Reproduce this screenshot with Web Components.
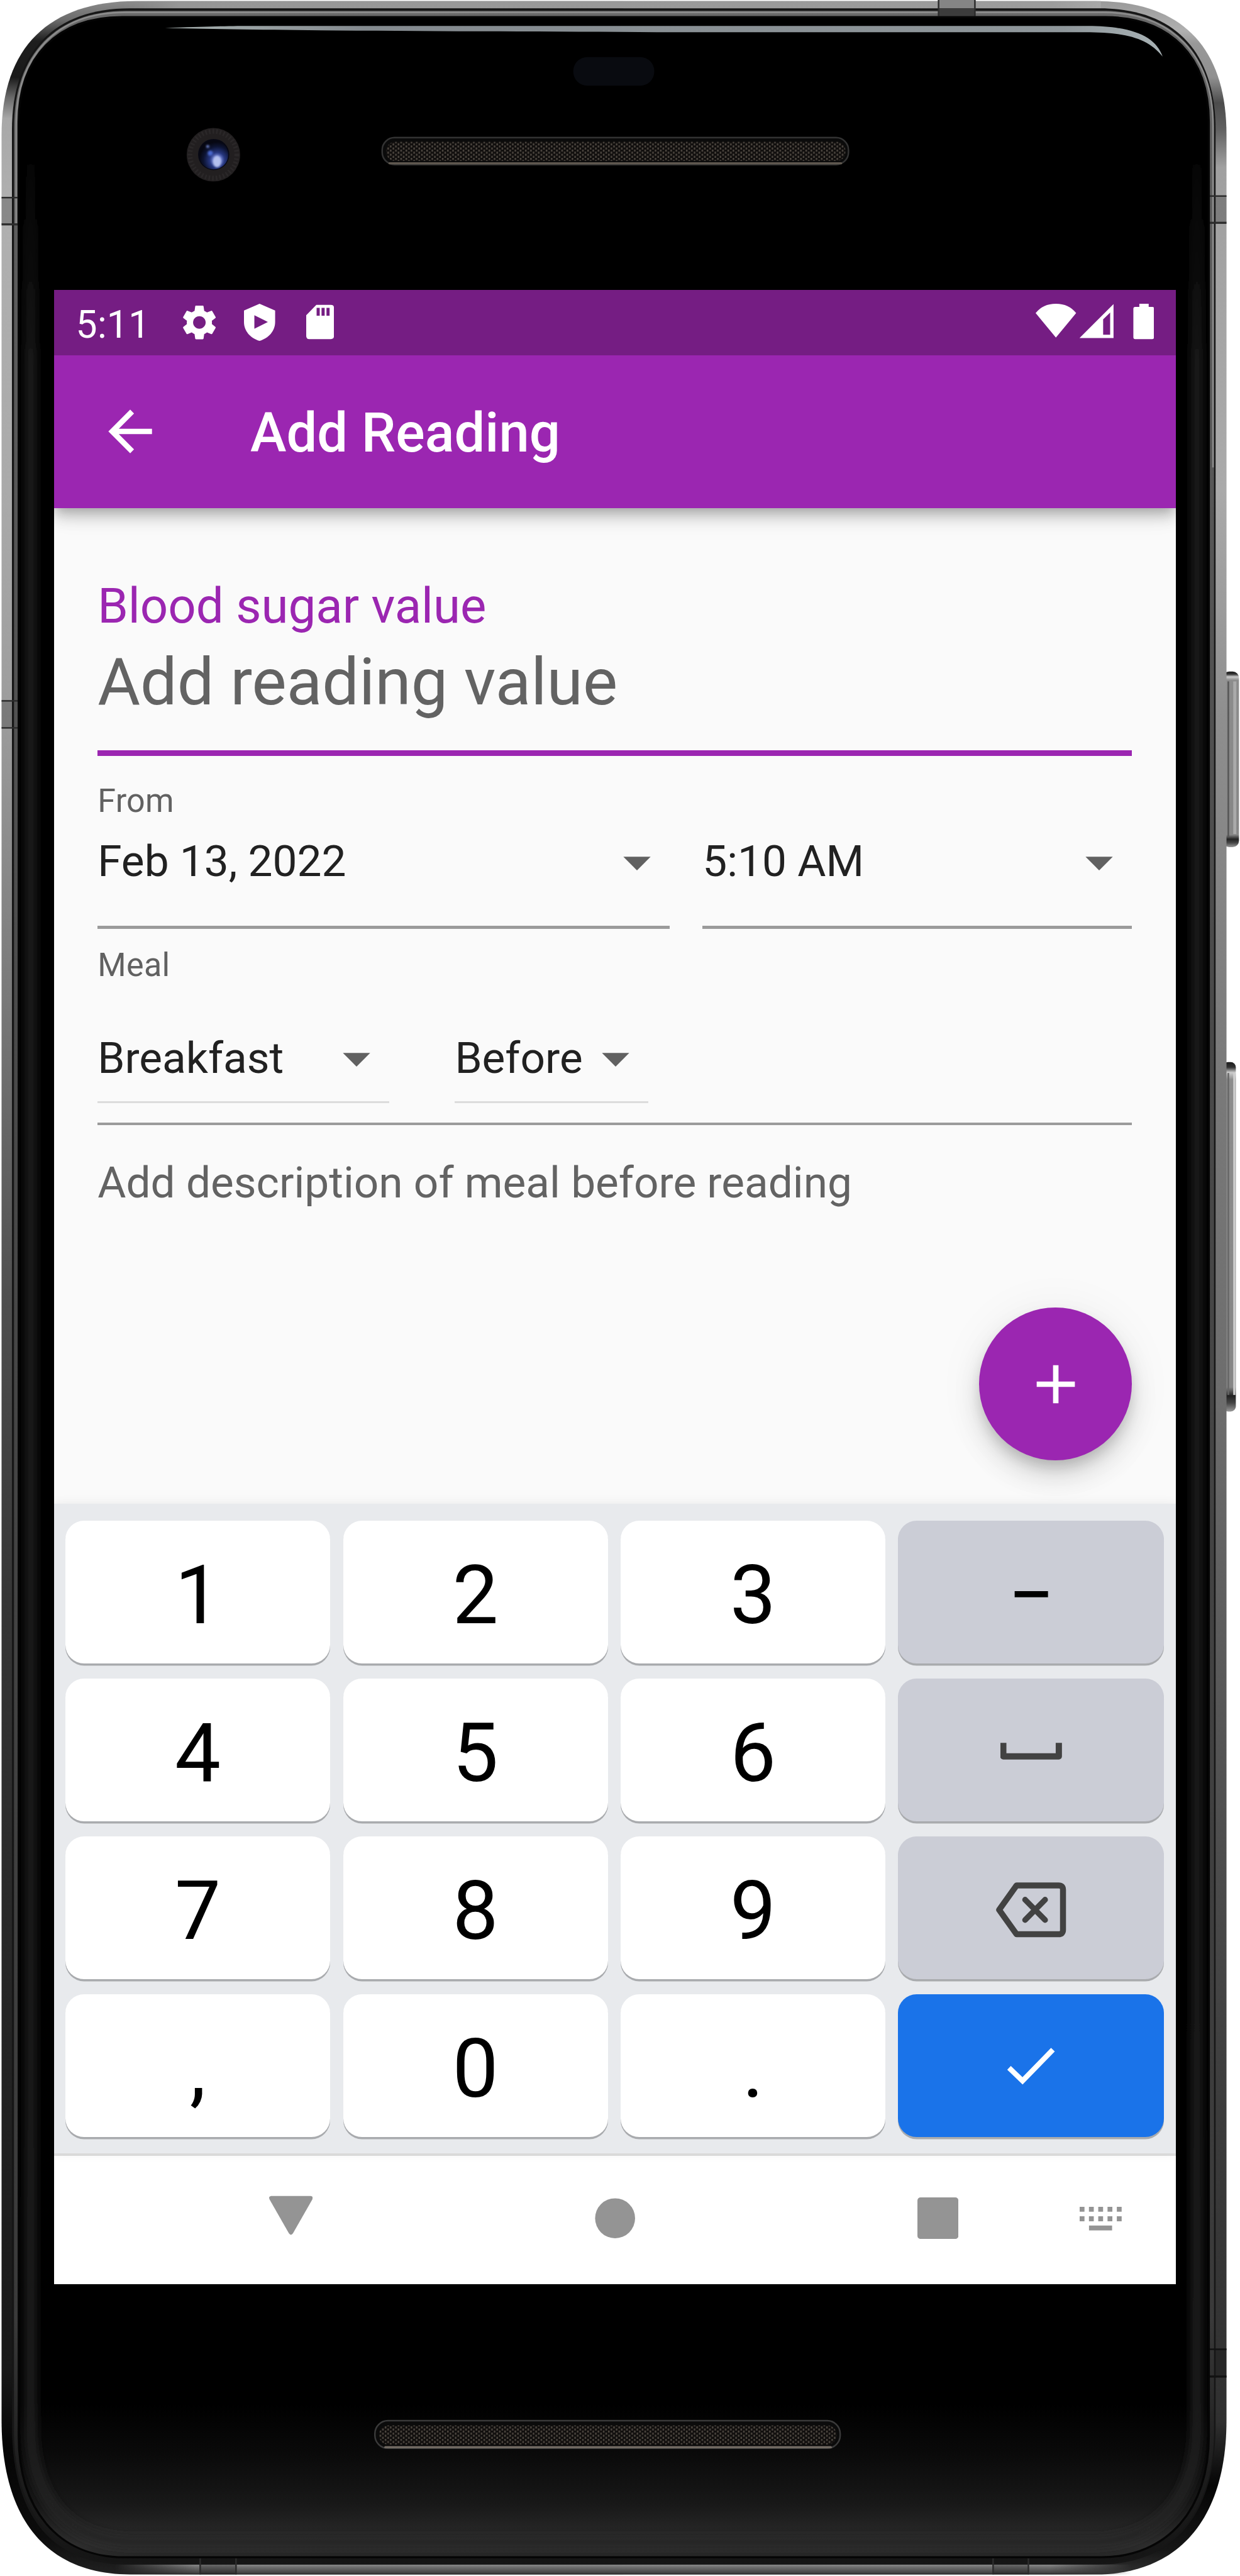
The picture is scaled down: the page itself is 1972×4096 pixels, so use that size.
<!DOCTYPE html>
<html lang="en">
<head>
<meta charset="utf-8">
<title>Add Reading</title>
<style>
  /* 1rem is 100 device units; every length below is given in those units */
  html { font-size: 82.58px; background: #fff; }
  body { margin: 0; font-family: Roboto, "Liberation Sans", sans-serif; overflow: hidden; }
</style>
</head>
<body>
<device-frame>
  <status-bar time="5:11"></status-bar>
  <app-bar>Add Reading</app-bar>
  <reading-form></reading-form>
  <number-pad></number-pad>
  <nav-bar></nav-bar>
</device-frame>

<script>
const define = (name, markup) => {
  const tpl = document.createElement('template');
  tpl.innerHTML = markup;
  customElements.define(name, class extends HTMLElement {
    constructor() {
      super();
      this.attachShadow({ mode: 'open' }).append(tpl.content.cloneNode(true));
    }
    connectedCallback() {
      this.shadowRoot.querySelectorAll('[data-attr]').forEach(n => {
        n.textContent = this.getAttribute(n.dataset.attr) || '';
      });
    }
  });
};

/* ---------- device shell ---------- */
define('device-frame', `
<style>
  :host { display: grid; width: 23.88rem; height: 49.6rem; }
  svg, .screen { grid-area: 1 / 1; }
  svg { width: 23.88rem; height: 49.6rem; display: block; }
  .screen { margin: 5.58rem 0 0 1.04rem; width: 21.6rem; height: 38.4rem; display: flex; flex-direction: column; background: #fafafa; overflow: hidden; z-index: 1; }
</style>
<svg viewBox="0 0 2388 4960" aria-hidden="true">
  <defs>
    <linearGradient id="metalL" gradientUnits="userSpaceOnUse" x1="0" y1="0" x2="0" y2="4960">
      <stop offset="0" stop-color="#8c8c8c"/><stop offset=".008" stop-color="#6a6a6a"/><stop offset=".016" stop-color="#1e1e1e"/>
      <stop offset=".03" stop-color="#1a1a1a"/><stop offset=".038" stop-color="#6a6a6a"/><stop offset=".046" stop-color="#a8a8a8"/>
      <stop offset=".08" stop-color="#b0b0b0"/><stop offset=".19" stop-color="#aaa"/><stop offset=".28" stop-color="#9c9c9c"/>
      <stop offset=".39" stop-color="#787878"/><stop offset=".5" stop-color="#505050"/><stop offset=".62" stop-color="#363636"/>
      <stop offset=".78" stop-color="#252525"/><stop offset=".92" stop-color="#181818"/><stop offset=".95" stop-color="#050505"/>
      <stop offset=".985" stop-color="#0c0c0c"/><stop offset="1" stop-color="#222"/>
    </linearGradient>
    <linearGradient id="metalR" gradientUnits="userSpaceOnUse" x1="0" y1="0" x2="0" y2="4960">
      <stop offset="0" stop-color="#999"/><stop offset=".012" stop-color="#b0b0b0"/><stop offset=".017" stop-color="#989898"/>
      <stop offset=".03" stop-color="#909090"/><stop offset=".04" stop-color="#4c4c4c"/><stop offset=".05" stop-color="#606060"/><stop offset=".065" stop-color="#a0a0a0"/>
      <stop offset=".19" stop-color="#aaa"/><stop offset=".28" stop-color="#8e8e8e"/><stop offset=".4" stop-color="#7c7c7c"/>
      <stop offset=".55" stop-color="#6c6c6c"/><stop offset=".68" stop-color="#545454"/><stop offset=".82" stop-color="#3c3c3c"/>
      <stop offset=".94" stop-color="#303030"/><stop offset=".965" stop-color="#050505"/><stop offset=".99" stop-color="#161616"/><stop offset="1" stop-color="#333"/>
    </linearGradient>
    <linearGradient id="bandV" gradientUnits="userSpaceOnUse" x1="0" y1="0" x2="0" y2="4960">
      <stop offset="0" stop-color="#6a6a6a"/><stop offset=".05" stop-color="#606060"/><stop offset=".4" stop-color="#4a4a4a"/>
      <stop offset=".9" stop-color="#3a3a3a"/><stop offset=".96" stop-color="#1c1c1c"/><stop offset="1" stop-color="#141414"/>
    </linearGradient>
    <linearGradient id="topEdge" x1="0" x2="1" y1="0" y2="0">
      <stop offset="0" stop-color="#8e8e8e" stop-opacity="0"/><stop offset=".06" stop-color="#969696"/><stop offset=".95" stop-color="#9c9c9c"/><stop offset="1" stop-color="#a8a8a8"/>
    </linearGradient>
    <linearGradient id="botEdge" x1="0" x2="0" y1="0" y2="1">
      <stop offset="0" stop-color="#8a8a8a"/><stop offset=".3" stop-color="#6c6c6c"/><stop offset=".8" stop-color="#474747"/><stop offset="1" stop-color="#2a2a2a"/>
    </linearGradient>
    <linearGradient id="botFade" gradientUnits="userSpaceOnUse" x1="220" y1="0" x2="2180" y2="0">
      <stop offset="0" stop-color="#fff" stop-opacity="0"/><stop offset=".08" stop-color="#fff"/><stop offset=".92" stop-color="#fff"/><stop offset="1" stop-color="#fff" stop-opacity="0"/>
    </linearGradient>
    <mask id="botMask" maskUnits="userSpaceOnUse" x="0" y="4900" width="2388" height="60"><rect x="0" y="4900" width="2388" height="60" fill="url(#botFade)"/></mask>
    <linearGradient id="chin" gradientUnits="userSpaceOnUse" x1="0" y1="4630" x2="0" y2="4924">
      <stop offset="0" stop-color="#000"/><stop offset=".3" stop-color="#090909"/><stop offset=".65" stop-color="#181818"/><stop offset=".92" stop-color="#2d2d2d"/><stop offset="1" stop-color="#282828"/>
    </linearGradient>
    <linearGradient id="shine" x1="0" x2="1" y1="0" y2="0">
      <stop offset="0" stop-color="#a9b3b2"/><stop offset=".2" stop-color="#848a8f"/><stop offset=".9" stop-color="#8f979b"/><stop offset="1" stop-color="#a8b2b5"/>
    </linearGradient>
    <linearGradient id="glow" gradientUnits="userSpaceOnUse" x1="0" y1="250" x2="0" y2="4900">
      <stop offset="0" stop-color="#212121" stop-opacity="0"/><stop offset=".1" stop-color="#212121"/><stop offset="1" stop-color="#252525"/>
    </linearGradient>
    <linearGradient id="btn" x1="0" x2="0" y1="0" y2="1">
      <stop offset="0" stop-color="#1c1c1c"/><stop offset=".015" stop-color="#333"/><stop offset=".03" stop-color="#ccc"/><stop offset=".05" stop-color="#8c8c8c"/>
      <stop offset=".93" stop-color="#868686"/><stop offset=".955" stop-color="#222"/><stop offset=".975" stop-color="#444"/><stop offset="1" stop-color="#999"/>
    </linearGradient>
    <pattern id="mesh" width="10" height="8" patternUnits="userSpaceOnUse">
      <rect width="10" height="8" fill="#100e0d"/><rect x="1" y="0" width="3" height="4" fill="#4e4841"/><rect x="6" y="4" width="3" height="4" fill="#4e4841"/>
    </pattern>
    <radialGradient id="lens" cx=".62" cy=".68" r=".62">
      <stop offset="0" stop-color="#b3bff0"/><stop offset=".2" stop-color="#6f80cf"/><stop offset=".42" stop-color="#26367e"/><stop offset=".75" stop-color="#0d1433"/><stop offset="1" stop-color="#060712"/>
    </radialGradient>
    <clipPath id="leftHalf"><rect x="0" y="0" width="1200" height="4960"/></clipPath>
    <clipPath id="rightHalf"><rect x="1200" y="0" width="1188" height="4960"/></clipPath>
    <clipPath id="glassClip"><path id="g" d="M36 235C36 110 110 33 235 33H2129C2254 33 2328 110 2328 235V4690C2328 4830 2250 4924 2120 4924H240C110 4924 36 4830 36 4690Z"/></clipPath>
    <filter id="soft" filterUnits="userSpaceOnUse" x="0" y="200" width="2388" height="4760"><feGaussianBlur stdDeviation="9"/></filter>
    <filter id="tiny"><feGaussianBlur stdDeviation="2"/></filter>
  </defs>

  <!-- side buttons -->
  <g>
    <rect x="2355" y="1293" width="31" height="338" rx="12" fill="url(#btn)"/>
    <rect x="2375" y="1312" width="6" height="294" fill="#aaa"/>
    <rect x="2364" y="1312" width="3" height="300" fill="#555"/>
    <rect x="2355" y="2045" width="25" height="673" rx="10" fill="url(#btn)"/>
    <rect x="2375" y="2066" width="4" height="620" fill="#d0d0d0"/>
    <rect x="2364" y="2066" width="3" height="620" fill="#666"/>
  </g>

  <!-- metal body -->
  <path clip-path="url(#leftHalf)" fill="url(#metalL)" d="M3 260C3 90 95 2 262 2H2110C2275 2 2362 90 2362 260V4660C2362 4850 2270 4957 2110 4957H250C90 4957 3 4850 3 4660Z"/>
  <path clip-path="url(#rightHalf)" fill="url(#metalR)" d="M3 260C3 90 95 2 262 2H2110C2275 2 2362 90 2362 260V4660C2362 4850 2270 4957 2110 4957H250C90 4957 3 4850 3 4660Z"/>
  <rect x="230" y="2" width="1890" height="14" fill="url(#topEdge)"/>
  <rect x="220" y="4938" width="1960" height="19" fill="url(#botEdge)" mask="url(#botMask)"/>
  <!-- antenna bands -->
  <g fill="#000" fill-opacity=".22">
    <rect x="3" y="381" width="33" height="50"/><rect x="2329" y="378" width="33" height="50"/>
    <rect x="3" y="1350" width="33" height="50"/><rect x="2329" y="4524" width="33" height="50"/>
    <rect x="385" y="4926" width="70" height="31"/><rect x="1913" y="4926" width="68" height="31"/>
  </g>
  <rect x="1808" y="0" width="70" height="16" fill="#858585"/>
  <!-- dark seam and inner bevel -->
  <path d="M23 250C23 100 105 16 250 16H2118C2262 16 2341 100 2341 250V4670C2341 4845 2258 4938 2115 4938H245C100 4938 23 4845 23 4670Z" fill="#161616"/>
  <path d="M27 245C27 104 108 21 244 21H2122C2258 21 2338 104 2338 245V4680C2338 4838 2256 4934 2118 4934H242C106 4934 27 4838 27 4680Z" fill="url(#bandV)"/>
  <path d="M31 430V242C31 106 110 24 240 24H2125C2256 24 2336 106 2336 242V900" fill="none" stroke="#8d8d8d" stroke-width="3"/>
  <rect x="1808" y="16" width="70" height="15" fill="#3c3c3c"/>
  <g fill="#2c2c2c">
    <rect x="3" y="379" width="33" height="3"/><rect x="3" y="430" width="33" height="4"/>
    <rect x="2329" y="376" width="33" height="3"/><rect x="2329" y="427" width="33" height="4"/>
    <rect x="3" y="1348" width="33" height="3"/><rect x="3" y="1400" width="33" height="3"/>
    <rect x="2329" y="4522" width="33" height="3" fill="#111"/><rect x="2329" y="4574" width="33" height="4" fill="#111"/>
    <rect x="1806" y="0" width="3" height="31"/><rect x="1876" y="0" width="3" height="31"/>
    <rect x="384" y="4926" width="3" height="31"/><rect x="453" y="4926" width="3" height="31"/>
    <rect x="1911" y="4926" width="3" height="31"/><rect x="1979" y="4926" width="3" height="31"/>
  </g>

  <!-- glass -->
  <use href="#g" fill="#000"/>
  <g clip-path="url(#glassClip)">
    <rect x="36" y="4630" width="2292" height="294" fill="url(#chin)"/>
    <path d="M59 250V4670C59 4800 120 4890 250 4895H2110C2240 4890 2305 4800 2305 4670V250" fill="none" stroke="url(#glow)" stroke-width="18" filter="url(#soft)"/>
  </g>
  <use href="#g" fill="none" stroke="#050505" stroke-width="4"/>

  <path d="M318 54C400 51 440 50 480 50H2095C2180 50 2226 70 2239 109C2210 72 2165 62 2090 62H1300C900 60 500 59 318 54Z" fill="url(#shine)"/>
  <rect x="1104" y="110" width="156" height="55" rx="27" fill="#090b10"/>

  <!-- camera -->
  <circle cx="411" cy="298" r="51.5" fill="#221f20"/>
  <circle cx="411" cy="298" r="45" fill="none" stroke="#2b2829" stroke-width="9" stroke-dasharray="3 4"/>
  <circle cx="411.500" cy="297.500" r="30" fill="#070814"/>
  <circle cx="411.500" cy="298" r="28" fill="url(#lens)"/>
  <g filter="url(#tiny)"><ellipse cx="418" cy="311" rx="8" ry="11" fill="#b4c0ee"/><circle cx="405" cy="295" r="5" fill="#4a66cc"/><circle cx="400" cy="282" r="3" fill="#6c80c8"/></g>

  <!-- speakers -->
  <g>
    <rect x="736" y="265" width="898" height="52" rx="24" fill="#0b0b0b" stroke="#333" stroke-width="3"/>
    <rect x="744" y="273" width="884" height="37" rx="17" fill="url(#mesh)"/>
    <path d="M750 314.500H1620" stroke="#5f584f" stroke-width="4" stroke-linecap="round"/>
    <rect x="722" y="4661" width="896" height="53" rx="25" fill="#0b0b0b" stroke="#3a3a3a" stroke-width="3"/>
    <rect x="730" y="4670" width="881" height="37" rx="18" fill="url(#mesh)"/>
    <path d="M742 4712H1600" stroke="#746c64" stroke-width="4" stroke-linecap="round"/>
  </g>
</svg>
<div class="screen"><slot></slot></div>`);

/* ---------- status bar ---------- */
define('status-bar', `
<style>
  :host { display: flex; align-items: center; justify-content: space-between; box-sizing: border-box; height: 1.26rem; flex: none; background: #751d83; color: #fff; padding: 0 .42rem 0 .42rem; position: relative; z-index: 2; }
  .l, .r { display: flex; align-items: center; }
  .time { font-size: .735rem; line-height: .86rem; letter-spacing: .003rem; padding-top: .08rem; width: 2.04rem; }
  svg { display: block; fill: #fff; }
</style>
<div class="l">
  <span class="time" data-attr="time"></span>
  <svg style="width:.68rem;height:.72rem" viewBox="1.9 1.300 20.200 21.400"><path d="M19.140 12.940c.04-.3.06-.61.06-.94 0-.32-.02-.64-.07-.94l2.030-1.580c.18-.14.23-.41.12-.61l-1.920-3.320c-.12-.22-.37-.29-.59-.22l-2.390.96c-.5-.38-1.030-.7-1.620-.94l-.36-2.540c-.04-.24-.24-.41-.48-.41h-3.840c-.24 0-.43.17-.47.41l-.36 2.540c-.59.24-1.130.57-1.620.94l-2.390-.96c-.22-.08-.47 0-.59.22L2.740 8.870c-.12.21-.08.47.12.61l2.030 1.580c-.05.3-.09.63-.09.94s.02.64.07.94l-2.030 1.580c-.18.14-.23.41-.12.61l1.920 3.320c.12.22.37.29.59.22l2.390-.96c.5.38 1.030.7 1.620.94l.36 2.540c.05.24.24.41.48.41h3.840c.24 0 .44-.17.47-.41l.36-2.540c.59-.24 1.130-.56 1.620-.94l2.390.96c.22.08.47 0 .59-.22l1.920-3.320c.12-.22.07-.47-.12-.61l-2.010-1.580zM12 15.600c-1.980 0-3.600-1.620-3.600-3.600s1.620-3.600 3.600-3.600 3.600 1.620 3.600 3.600-1.620 3.600-3.600 3.600z"/></svg>
  <svg style="width:.6rem;height:.72rem;margin-left:.52rem" viewBox="470 586 60 72"><path fill-rule="evenodd" d="M500 586l30 13v22c0 17-12 31-30 36.500-18-5.500-30-19.500-30-36.500v-22zM490 608v26l26-13z"/></svg>
  <svg style="width:.54rem;height:.72rem;margin-left:.595rem" viewBox="589.500 586 54 72"><path fill-rule="evenodd" d="M609 588h28q6 0 6 6v54q0 6-6 6h-41.500q-6 0-6-6v-40zM609.500 594v15h6v-15zm9.500 0v15h6v-15zm9.500 0v15h6v-15z"/></svg>
</div>
<div class="r">
  <svg style="width:2.28rem;height:.72rem" viewBox="1994 586 228 72"><path d="M1994 604Q2008 586 2033 586T2072 604L2033 651Z"/><path fill-rule="evenodd" d="M2144 586.500V652H2078.500ZM2137.500 603L2124 616V645.500H2137.500Z"/><path d="M2193.700 586h18v6h7q3.500 0 3.500 3.500v55q0 3.500-3.500 3.500h-33q-3.500 0-3.500-3.500v-55q0-3.500 3.500-3.500h8z"/></svg>
</div>`);

/* ---------- app bar ---------- */
define('app-bar', `
<style>
  :host { display: flex; align-items: center; box-sizing: border-box; height: 2.94rem; flex: none; background: #9b26b1; color: #fff; padding-left: .84rem; position: relative; z-index: 1; box-shadow: 0 .105rem .21rem -.053rem rgba(0,0,0,.2), 0 .21rem .26rem rgba(0,0,0,.14), 0 .053rem .525rem rgba(0,0,0,.12); }
  svg { width: 1.26rem; height: 1.26rem; fill: #fff; display: block; }
  .title { font-size: 1.05rem; font-weight: 500; line-height: 1.4rem; padding: .06rem 0 0 1.68rem; }
</style>
<svg viewBox="0 0 24 24"><path d="M20 11H7.830l5.590-5.590L12 4l-8 8 8 8 1.410-1.410L7.830 13H20v-2z"/></svg>
<div class="title"><slot></slot></div>`);

/* ---------- form pieces ---------- */
define('drop-down', `
<style>
  :host { display: block; }
  .row { display: flex; align-items: center; justify-content: space-between; height: 1.26rem; }
  .v { font-size: .84rem; line-height: .98rem; color: #212121; white-space: nowrap; }
  svg { width: 1.26rem; height: 1.26rem; fill: #616161; display: block; flex: none; }
  .line { background: var(--line, #9b9b9b); height: var(--line-h, .0525rem); margin-top: var(--line-gap, .603rem); }
</style>
<div class="row"><span class="v"><slot></slot></span><svg viewBox="0 0 24 24"><path d="M7 10l5 5 5-5z"/></svg></div>
<div class="line"></div>`);

define('field-label', `
<style>:host { display: block; font-size: .63rem; line-height: .74rem; letter-spacing: .004rem; color: #616161; }</style><slot></slot>`);

define('number-field', `
<style>
  :host { display: block; border-bottom: .11rem solid #9b26b1; }
  .label { font-size: .945rem; line-height: 1.06rem; color: #9b26b1; }
  .hint { font-size: 1.26rem; line-height: 1.48rem; color: #636363; margin-top: .183rem; padding-bottom: .575rem; }
</style>
<div class="label" data-attr="label"></div>
<div class="hint" data-attr="hint"></div>`);

define('add-button', `
<style>
  :host { display: flex; align-items: center; justify-content: center; width: 2.94rem; height: 2.94rem; border-radius: 50%; background: #9b26b1; box-shadow: 0 .158rem .263rem -.053rem rgba(0,0,0,.18), 0 .315rem .525rem rgba(0,0,0,.13), 0 .053rem .945rem rgba(0,0,0,.06); }
  svg { width: 1.26rem; height: 1.26rem; fill: #fff; display: block; }
</style>
<svg viewBox="0 0 24 24"><path d="M19 13h-6v6h-2v-6H5v-2h6V5h2v6h6v2z"/></svg>`);

define('reading-form', `
<style>
  :host { display: flex; flex-direction: column; box-sizing: border-box; height: 19.17rem; flex: none; padding: 1.367rem .84rem 0; background: #fafafa; }
  .when { display: grid; grid-template-columns: 11.02fr 8.27fr; column-gap: .63rem; margin-top: .178rem; }
  .meal { display: flex; gap: 1.26rem; margin-top: .805rem; --line: #dcdcdc; --line-h: .04rem; --line-gap: .185rem; }
  .rule { height: .0525rem; background: #9b9b9b; margin-top: .374rem; flex: none; }
  .desc { font-size: .84rem; line-height: .98rem; color: #636363; margin-top: .625rem; }
  add-button { align-self: flex-end; margin-top: 1.91rem; flex: none; }
</style>
<number-field label="Blood sugar value" hint="Add reading value"></number-field>
<field-label style="margin-top:.497rem">From</field-label>
<div class="when"><drop-down>Feb 13, 2022</drop-down><drop-down>5:10 AM</drop-down></div>
<field-label style="margin-top:.325rem">Meal</field-label>
<div class="meal"><drop-down style="width:5.62rem">Breakfast</drop-down><drop-down style="width:3.73rem">Before</drop-down></div>
<div class="rule"></div>
<div class="desc">Add description of meal before reading</div>
<add-button></add-button>`);

/* ---------- keyboard ---------- */
define('pad-key', `
<style>
  :host { display: flex; align-items: center; justify-content: center; box-sizing: border-box; height: 2.745rem; border-radius: .36rem; background: #fff; color: #000; font-size: 1.575rem; line-height: 1.84rem; box-shadow: 0 .042rem 0 #a9abae; }
  :host([kind="mod"]) { background: #cbcdd6; }
  :host([kind="go"]) { background: #1a73e9; }
  span { padding-top: .144rem; }
  ::slotted(svg) { display: block; }
</style>
<slot name="icon"></slot><span><slot></slot></span>`);

define('number-pad', `
<style>
  :host { display: grid; box-sizing: border-box; height: 12.51rem; flex: none; grid-template-columns: 5.1rem 5.1rem 5.1rem 5.12rem; column-gap: .246rem; row-gap: .295rem; align-content: start; padding: .33rem 0 0 .22rem; background: #e8eaed; position: relative; z-index: 1; box-shadow: 0 0 .2rem rgba(0,0,0,.07); }
  svg { fill: none; stroke: #424242; }
</style>
<pad-key>1</pad-key><pad-key>2</pad-key><pad-key>3</pad-key><pad-key kind="mod">−</pad-key>
<pad-key>4</pad-key><pad-key>5</pad-key><pad-key>6</pad-key>
<pad-key kind="mod"><svg slot="icon" style="width:1.18rem;height:.34rem;margin-top:.05rem" viewBox="1928 3355 118 34"><path d="M1933.500 3356.500V3382.500H2040.500V3356.500" stroke-width="12" stroke-linejoin="round"/></svg></pad-key>
<pad-key>7</pad-key><pad-key>8</pad-key><pad-key>9</pad-key>
<pad-key kind="mod"><svg slot="icon" style="width:1.35rem;height:1.06rem;margin-top:.09rem" viewBox="1917.500 3624.500 135 106"><path d="M1957 3630.500H2038Q2046.500 3630.500 2046.500 3639V3716Q2046.500 3724.500 2038 3724.500H1957L1923.500 3677.500Z" stroke-width="11.500" stroke-linejoin="round"/><path d="M1973.500 3658L2012 3697M2012 3658L1973.500 3697" stroke-width="11" stroke-linecap="round"/></svg></pad-key>
<pad-key>,</pad-key><pad-key>0</pad-key><pad-key>.</pad-key>
<pad-key kind="go"><svg slot="icon" style="width:.94rem;height:.72rem;margin-top:.02rem;stroke:#fff" viewBox="1939 3943 94 72"><path d="M1943.500 3983L1969.500 4008L2028 3948" stroke-width="10"/></svg></pad-key>`);

/* ---------- navigation bar ---------- */
define('nav-bar', `
<style>
  :host { display: flex; align-items: center; box-sizing: border-box; flex: 1; background: #fff; border-top: .06rem solid #e0e0e0; padding-left: 4.14rem; }
  svg { display: block; fill: #949494; }
</style>
<svg style="width:.84rem;height:.8rem;margin-top:-.16rem" viewBox="518 4227 84 80"><path d="M522 4229H598Q604 4230 601 4236L564 4301Q560 4307 556 4301L519 4236Q516 4230 522 4229Z"/></svg>
<svg style="width:.78rem;height:.78rem;margin-left:5.43rem;margin-top:-.06rem" viewBox="0 0 78 78"><circle cx="39" cy="39" r="38.500"/></svg>
<svg style="width:.79rem;height:.8rem;margin-left:5.435rem;margin-top:-.06rem" viewBox="0 0 79 80"><rect width="79" height="80" rx="6"/></svg>
<svg style="width:.81rem;height:.46rem;margin-left:2.335rem;margin-top:-.04rem" viewBox="2079 4250 81 46"><path d="M2079 4250h9.300v9.500h-9.300zm17.900 0h9.300v9.500h-9.300zm17.900 0h9.300v9.500h-9.300zm17.900 0h9.300v9.500h-9.300zm17.900 0h9.300v9.500h-9.300zM2079 4268.300h9.300v9.500h-9.300zm17.900 0h9.300v9.500h-9.300zm17.900 0h9.300v9.500h-9.300zm17.900 0h9.300v9.500h-9.300zm17.900 0h9.300v9.500h-9.300zM2097 4286h44.500v9.500H2097z"/></svg>`);
</script>
</body>
</html>
